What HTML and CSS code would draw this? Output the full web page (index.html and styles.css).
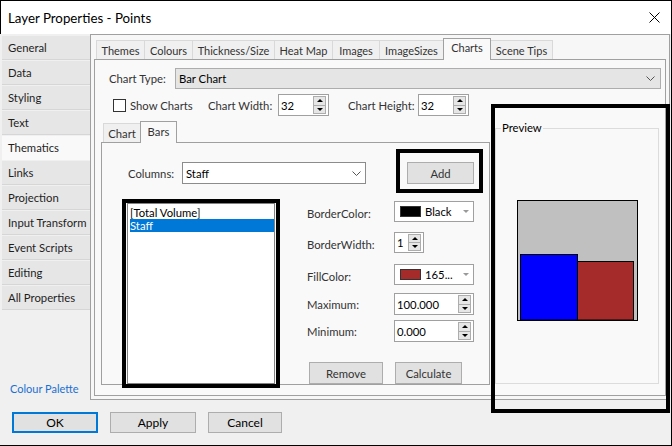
FILE: index.html
```html
<!DOCTYPE html>
<html>
<head>
<meta charset="utf-8">
<title>Layer Properties - Points</title>
<link rel="stylesheet" href="styles.css">
</head>
<body>
<div class="window">
  <div class="titlebar">
    <span class="title">Layer Properties - Points</span>
    <svg class="close" width="11" height="11" viewBox="0 0 11 11"><path d="M0.5 0.5 L10.5 10.5 M10.5 0.5 L0.5 10.5" stroke="#000" stroke-width="1" fill="none"/></svg>
  </div>
  <div class="main">
    <nav class="nav">
      <div class="nav-item">General</div>
      <div class="nav-item">Data</div>
      <div class="nav-item">Styling</div>
      <div class="nav-item">Text</div>
      <div class="nav-item active">Thematics</div>
      <div class="nav-item">Links</div>
      <div class="nav-item">Projection</div>
      <div class="nav-item">Input Transform</div>
      <div class="nav-item">Event Scripts</div>
      <div class="nav-item">Editing</div>
      <div class="nav-item">All Properties</div>
      <a class="palette">Colour Palette</a>
    </nav>
    <section class="panel">
      <div class="tabstrip">
        <div class="tab">Themes</div>
        <div class="tab">Colours</div>
        <div class="tab">Thickness/Size</div>
        <div class="tab">Heat Map</div>
        <div class="tab">Images</div>
        <div class="tab">ImageSizes</div>
        <div class="tab sel">Charts</div>
        <div class="tab">Scene Tips</div>
      </div>
      <div class="page">
        <div class="row row-type">
          <span class="lbl lbl-type">Chart Type:</span>
          <div class="combo combo-type">
            <span class="combo-text">Bar Chart</span>
            <svg class="chev" width="9" height="5" viewBox="0 0 9 5"><path d="M0.5 0.5 L4.5 4.5 L8.5 0.5" stroke="#555" fill="none"/></svg>
          </div>
        </div>
        <div class="row row-opts">
          <span class="check"></span>
          <span class="lbl lbl-show">Show Charts</span>
          <span class="lbl lbl-cw">Chart Width:</span>
          <div class="spin spin-chart"><span class="val">32</span><span class="spinbtns"><span class="up"></span><span class="down"></span></span></div>
          <span class="lbl lbl-ch">Chart Height:</span>
          <div class="spin spin-chart"><span class="val">32</span><span class="spinbtns"><span class="up"></span><span class="down"></span></span></div>
        </div>
        <div class="row row-lower">
          <div class="subtabs">
            <div class="substrip">
              <div class="subtab st-chart">Chart</div>
              <div class="subtab st-bars sel">Bars</div>
            </div>
            <div class="subpage">
              <div class="cols-row">
                <span class="lbl lbl-cols">Columns:</span>
                <div class="combo combo-cols">
                  <span class="combo-text">Staff</span>
                  <svg class="chev" width="9" height="5" viewBox="0 0 9 5"><path d="M0.5 0.5 L4.5 4.5 L8.5 0.5" stroke="#555" fill="none"/></svg>
                </div>
                <button class="btn btn-add">Add</button>
              </div>
              <div class="bars-body">
                <ul class="listbox">
                  <li>[Total Volume]</li>
                  <li class="sel">Staff</li>
                </ul>
                <div class="props">
                  <div class="prop p1">
                    <span class="lbl plbl">BorderColor:</span>
                    <div class="colorcombo"><span class="swatch sw-black"></span><span class="ctext">Black</span><span class="tri"></span></div>
                  </div>
                  <div class="prop p2">
                    <span class="lbl plbl">BorderWidth:</span>
                    <div class="spin spin-bw"><span class="val">1</span><span class="spinbtns"><span class="up"></span><span class="down"></span></span></div>
                  </div>
                  <div class="prop p3">
                    <span class="lbl plbl">FillColor:</span>
                    <div class="colorcombo"><span class="swatch sw-red"></span><span class="ctext">165...</span><span class="tri"></span></div>
                  </div>
                  <div class="prop p4">
                    <span class="lbl plbl">Maximum:</span>
                    <div class="spin spin-num"><span class="val">100.000</span><span class="spinbtns"><span class="up"></span><span class="down"></span></span></div>
                  </div>
                  <div class="prop p5">
                    <span class="lbl plbl">Minimum:</span>
                    <div class="spin spin-num"><span class="val">0.000</span><span class="spinbtns"><span class="up"></span><span class="down"></span></span></div>
                  </div>
                  <div class="prop-btns">
                    <button class="btn btn-remove">Remove</button>
                    <button class="btn btn-calc">Calculate</button>
                  </div>
                </div>
              </div>
            </div>
          </div>
          <fieldset class="preview">
            <legend>Preview</legend>
            <svg class="preview-chart" width="121" height="121" viewBox="0 0 121 121">
              <rect x="0.5" y="0.5" width="120" height="120" fill="#c0c0c0" stroke="#000"/>
              <rect x="3.5" y="54.5" width="57" height="65.5" fill="#0000ff" stroke="#000"/>
              <rect x="60.5" y="61.5" width="56" height="58.5" fill="#a52a2a" stroke="#000"/>
            </svg>
          </fieldset>
        </div>
      </div>
    </section>
  </div>
  <div class="footer">
    <button class="btn dlg ok">OK</button>
    <button class="btn dlg apply">Apply</button>
    <button class="btn dlg cancel">Cancel</button>
  </div>
  <div class="mark mark-preview"></div>
  <div class="mark mark-add"></div>
  <div class="mark mark-list"></div>
</div>
</body>
</html>
```

FILE: styles.css
```css
* { box-sizing: border-box; }
html, body { margin: 0; padding: 0; }
body {
  font-family: Lato, "Noto Sans", "DejaVu Sans", sans-serif;
  font-size: 11.3px;
  color: #000;
  background: #fff;
}
.window {
  position: relative;
  width: 672px;
  height: 446px;
  border: 1px solid #000;
  border-left: none;
  background: #f0f0f0;
  display: flex;
  flex-direction: column;
  overflow: hidden;
}
.titlebar {
  height: 33px;
  flex: none;
  background: #fff;
  border-left: 1px solid #000;
  display: flex;
  align-items: center;
  justify-content: space-between;
  padding: 0 11px 0 7px;
}
.title { font-size: 13.3px; line-height: 16px; }
.close { display: block; }

.main { display: flex; height: 366px; flex: none; }
.nav {
  width: 90px;
  flex: none;
  display: flex;
  flex-direction: column;
  padding: 2px 0 3px 2px;
}
.nav-item {
  height: 24px;
  margin-bottom: 1px;
  padding-left: 6px;
  line-height: 24px;
  background: #e6e6e6;
  border-bottom: 1px solid #d6d6d6;
  color: #1e1e1e;
  white-space: nowrap;
}
.nav-item.active { background: #f9f9f9; border-bottom-color: #f9f9f9; }
.palette {
  margin-top: auto;
  padding-left: 8px;
  line-height: 16px;
  font-size: 11px;
  color: #1a6fd0;
  white-space: nowrap;
}

.panel {
  width: 580px;
  height: 366px;
  flex: none;
  border: 1px solid #a0a0a0;
  background: #f7f7f7;
  padding: 0 3px 3px 3px;
  display: flex;
  flex-direction: column;
}
.tabstrip {
  height: 24px;
  flex: none;
  display: flex;
  align-items: flex-end;
  padding-left: 2px;
}
.tab {
  flex: none;
  height: 19px;
  border: 1px solid #d9d9d9;
  border-bottom: none;
  background: #f0f0f0;
  margin-right: -1px;
  text-align: center;
  line-height: 19px;
  font-size: 11px;
  color: #333;
  white-space: nowrap;
}
.tab:nth-child(1) { width: 49px; }
.tab:nth-child(2) { width: 49px; }
.tab:nth-child(3) { width: 83px; }
.tab:nth-child(4) { width: 59px; }
.tab:nth-child(5) { width: 48px; }
.tab:nth-child(6) { width: 65px; }
.tab:nth-child(7) { width: 48px; }
.tab:nth-child(8) { width: 63px; }
.tab.sel {
  height: 22px;
  margin-bottom: -1px;
  position: relative;
  z-index: 1;
  background: #f9f9f9;
  border-color: #a0a0a0;
  line-height: 18px;
}

.page {
  flex: 1;
  border: 1px solid #a0a0a0;
  background: #f9f9f9;
  display: flex;
  flex-direction: column;
  padding-left: 6px;
}
.row { display: flex; align-items: center; flex: none; }
.lbl { color: #333; white-space: nowrap; }
.row-type { margin: 8px 0 0 8px; height: 21px; }
.lbl-type { width: 66px; }
.combo {
  height: 100%;
  display: flex;
  align-items: center;
  border: 1px solid #adadad;
}
.combo-text { flex: 1; padding-left: 3px; white-space: nowrap; color: #000; }
.combo-type { width: 486px; background: #e5e5e5; }
.combo-type .chev { margin-right: 5px; }
.chev { display: block; flex: none; }

.row-opts { margin: 5px 0 0 8px; height: 22px; }
.check {
  width: 13px;
  height: 13px;
  margin-left: 4px;
  border: 1px solid #333;
  background: #fff;
  flex: none;
}
.lbl-show { margin-left: 4px; width: 78px; }
.lbl-cw { width: 70px; }
.lbl-ch { width: 70px; margin-left: 19px; }

.spin {
  height: 100%;
  display: flex;
  align-items: stretch;
  border: 1px solid #a0a0a0;
  background: #fff;
  padding: 1px;
  flex: none;
}
.spin .val { flex: 1; display: flex; align-items: center; padding-left: 1px; white-space: nowrap; color: #000; }
.spinbtns {
  width: 13px;
  flex: none;
  display: flex;
  flex-direction: column;
  margin-right: 1px;
}
.spinbtns span {
  flex: 1;
  border: 1px solid #adadad;
  background: #e6e6e6;
  display: flex;
  align-items: center;
  justify-content: center;
}
.spinbtns .up { border-bottom: none; }
.spinbtns .up::after,
.spinbtns .down::after {
  content: "";
  width: 0;
  height: 0;
  border-left: 3px solid transparent;
  border-right: 3px solid transparent;
}
.spinbtns .up::after { border-bottom: 3px solid #000; }
.spinbtns .down::after { border-top: 3px solid #000; }
.spin-chart { width: 51px; }
.spin-bw { width: 30px; height: 21px; }
.spin-num { width: 80px; height: 22px; }

.row-lower { margin-top: 5px; align-items: flex-start; }
.subtabs { width: 389px; height: 264px; display: flex; flex-direction: column; flex: none; }
.substrip { height: 21px; display: flex; align-items: flex-end; padding-left: 2px; flex: none; }
.subtab {
  height: 19px;
  border: 1px solid #d9d9d9;
  border-bottom: none;
  background: #f0f0f0;
  margin-right: -1px;
  text-align: center;
  line-height: 19px;
  color: #333;
  flex: none;
}
.st-chart { width: 38px; }
.st-bars { width: 37px; }
.subtab.sel {
  height: 22px;
  margin-bottom: -1px;
  position: relative;
  z-index: 1;
  background: #f9f9f9;
  border-color: #a0a0a0;
  line-height: 19px;
}
.subpage {
  flex: 1;
  border: 1px solid #a0a0a0;
  background: #f9f9f9;
  overflow: hidden;
}
.cols-row { display: flex; align-items: center; height: 22px; margin-top: 19px; padding-left: 26px; }
.lbl-cols { width: 54px; }
.combo-cols { width: 184px; background: #fff; border-color: #8c8c8c; }
.combo-cols .chev { margin-right: 4px; }
.btn {
  font-family: inherit;
  font-size: 11.3px;
  padding: 0;
  margin: 0;
  background: #e1e1e1;
  border: 1px solid #adadad;
  color: #333;
  text-align: center;
  flex: none;
}
.btn-add { width: 67px; height: 22px; margin-left: 41px; }

.bars-body { display: flex; align-items: flex-start; margin-top: 19px; padding-left: 25px; }
.listbox {
  list-style: none;
  margin: 0;
  padding: 2px 0 0 2px;
  width: 148px;
  height: 181px;
  background: #fff;
  border: 1px solid #828282;
  flex: none;
}
.listbox li { height: 13px; line-height: 13px; white-space: nowrap; }
.listbox li.sel { background: #0078d7; color: #fff; }

.props { margin-left: 32px; margin-top: -2px; display: flex; flex-direction: column; }
.prop { display: flex; align-items: center; height: 21px; }
.plbl { width: 87px; padding-top: 3px; }
.p2 { margin-top: 10px; }
.p3 { margin-top: 11px; }
.p4 { margin-top: 8px; height: 22px; }
.p5 { margin-top: 5px; height: 22px; }
.p4 .plbl, .p5 .plbl { padding-top: 0; }
.colorcombo {
  width: 80px;
  height: 21px;
  display: flex;
  align-items: center;
  background: #fff;
  border: 1px solid #a0a0a0;
}
.swatch { width: 21px; height: 11px; margin-left: 5px; border: 1px solid #333; flex: none; }
.sw-black { background: #000; }
.sw-red { background: #a52a2a; }
.ctext { margin-left: 4px; color: #000; }
.tri {
  margin-left: auto;
  margin-right: 4px;
  width: 0;
  height: 0;
  border-left: 3px solid transparent;
  border-right: 3px solid transparent;
  border-top: 3px solid #999;
}
.prop-btns { display: flex; margin-top: 20px; padding-left: 2px; }
.btn-remove { width: 74px; height: 22px; }
.btn-calc { width: 67px; height: 22px; margin-left: 12px; }

.preview {
  width: 164px;
  height: 264px;
  margin: -1px 0 0 5px;
  padding: 0;
  border: 1px solid #dcdcdc;
  flex: none;
}
.preview legend {
  margin-left: 5px;
  padding: 0 1px;
  line-height: 16px;
  color: #000;
}
.preview-chart { display: block; margin: 64px auto 0; }

.footer {
  flex: 1;
  display: flex;
  align-items: flex-start;
  gap: 12px;
  padding: 12px 0 0 12px;
}
.dlg { height: 21px; color: #000; font-size: 12px; }
.ok { width: 86px; border: 2px solid #0078d7; }
.apply { width: 86px; }
.cancel { width: 74px; }

.mark {
  position: absolute;
  border: 4px solid #000;
  pointer-events: none;
  z-index: 5;
}
.mark-preview { left: 491px; top: 103px; width: 179px; height: 309px; }
.mark-add { left: 396px; top: 148px; width: 87px; height: 44px; }
.mark-list { left: 122px; top: 198px; width: 158px; height: 189px; }
```
